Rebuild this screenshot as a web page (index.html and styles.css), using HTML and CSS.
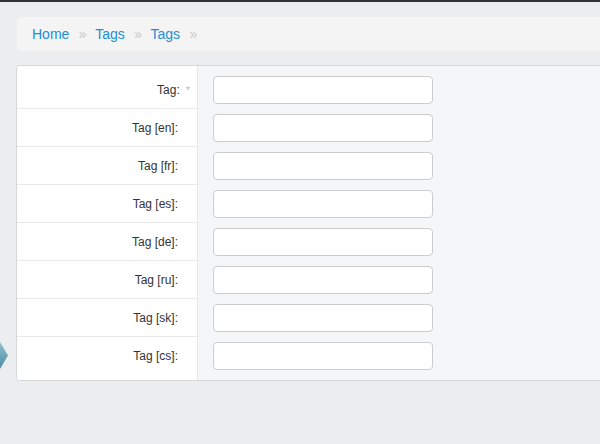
FILE: index.html
```html
<!DOCTYPE html>
<html lang="en">
<head>
    <meta charset="UTF-8">
    <meta name="viewport" content="width=device-width, initial-scale=1.0">
    <title>Tags</title>
    <link rel="stylesheet" href="styles.css">
</head>
<body>
    <div class="main">
        <!-- Breadcrumb -->
        <ul class="breadcrumb">
            <li><a href="#">Home</a></li>
            <li><a href="#">Tags</a></li>
            <li><a href="#">Tags</a></li>
            <li></li>
        </ul>

        <!-- Tag translations form -->
        <form class="tag-form">
            <div class="labels">
                <label class="label">Tag:<span class="required">*</span></label>
                <label class="label">Tag [en]:</label>
                <label class="label">Tag [fr]:</label>
                <label class="label">Tag [es]:</label>
                <label class="label">Tag [de]:</label>
                <label class="label">Tag [ru]:</label>
                <label class="label">Tag [sk]:</label>
                <label class="label">Tag [cs]:</label>
            </div>
            <div class="fields">
                <div class="field"><input type="text" class="text-input"></div>
                <div class="field"><input type="text" class="text-input"></div>
                <div class="field"><input type="text" class="text-input"></div>
                <div class="field"><input type="text" class="text-input"></div>
                <div class="field"><input type="text" class="text-input"></div>
                <div class="field"><input type="text" class="text-input"></div>
                <div class="field"><input type="text" class="text-input"></div>
                <div class="field"><input type="text" class="text-input"></div>
            </div>
        </form>
    </div>

    <!-- Sidebar toggle tab -->
    <div class="side-tab"></div>
</body>
</html>
```

FILE: styles.css
```css
/* Page */
body {
    margin: 0;
    background-color: #ecedef;
    border-top: 2px solid #333;
    font-family: "Liberation Sans", Arial, sans-serif;
    overflow: hidden;
}

.main {
    padding: 15px 0 0 16px;
    margin-right: -30px;
}

/* Breadcrumb */
.breadcrumb {
    list-style: none;
    margin: 0 0 14px 1px;
    padding: 0 15px;
    height: 34px;
    display: flex;
    align-items: center;
    background-color: #f4f4f4;
    border-radius: 4px;
    font-size: 14px;
}

.breadcrumb li + li::before {
    content: "\00bb";
    color: #c8c8c8;
    margin: 0 8.5px 0 9.5px;
}

.breadcrumb a {
    color: #1b8ed6;
    text-decoration: none;
}

/* Form card */
.tag-form {
    display: flex;
    background-color: #f5f6f8;
    border: 1px solid #d6d7d9;
    border-radius: 4px;
    overflow: hidden;
}

.labels {
    width: 180px;
    flex-shrink: 0;
    background-color: white;
    border-right: 1px solid #e6e7e9;
    padding: 5px 0;
}

.label {
    display: block;
    height: 37px;
    line-height: 39px;
    border-bottom: 1px solid #e8e9eb;
    padding-right: 19px;
    text-align: right;
    font-size: 12px;
    color: #333;
}

.label:last-child {
    border-bottom: none;
}

.required {
    color: #bbb;
    font-size: 11px;
    margin-left: 6px;
    margin-right: -12px;
}

.fields {
    flex: 1;
    padding: 5px 15px;
}

.field {
    height: 38px;
    display: flex;
    align-items: center;
}

.text-input {
    width: 220px;
    height: 28px;
    box-sizing: border-box;
    border: 1px solid #ccc;
    border-radius: 4px;
    background-color: white;
    outline: none;
}

/* Little tab peeking from the left edge */
.side-tab {
    position: absolute;
    left: 0;
    top: 342px;
    width: 8px;
    height: 27px;
    background: linear-gradient(to bottom, #8fc0d1, #4d8ca3);
    clip-path: polygon(0 0, 100% 50%, 0 100%);
}
```
